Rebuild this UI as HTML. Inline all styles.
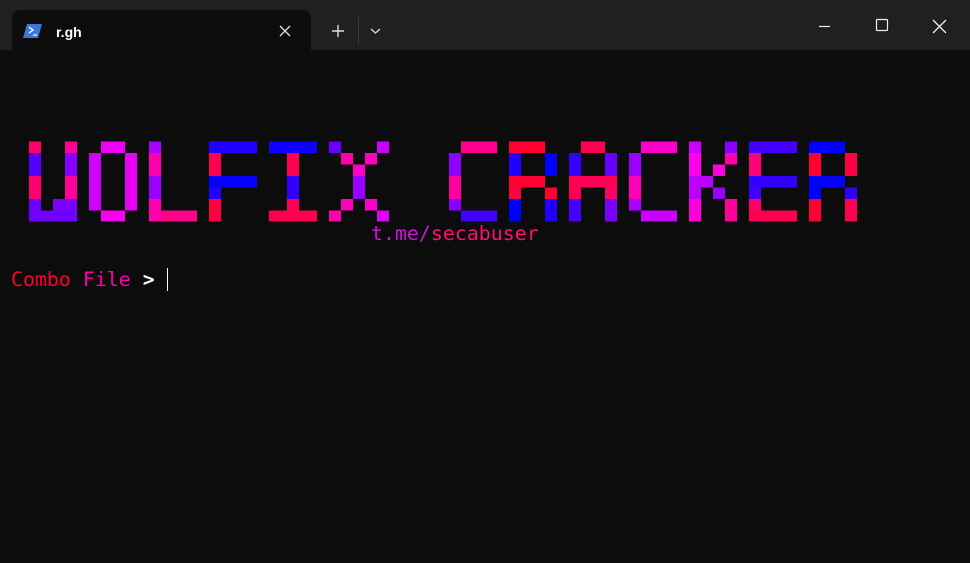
<!DOCTYPE html>
<html><head><meta charset="utf-8"><style>
html,body{margin:0;padding:0;width:970px;height:563px;overflow:hidden;background:#0c0c0c}
.top{position:absolute;left:0;top:0;width:970px;height:50px;background:#202020}
.tab{position:absolute;left:12px;top:10px;width:299px;height:41px;background:#0c0c0c;border-radius:8px 8px 0 0}
.t{position:absolute;font-family:"DejaVu Sans Mono","Liberation Mono",monospace;font-size:19.9px;white-space:pre;line-height:23px}
</style></head><body>
<div class="top"></div>
<div class="tab"></div>
<svg style="position:absolute;left:0;top:0" width="970" height="563">
<polygon points="27,24 42,24 38,38 23,38" fill="#3b78d8"/>
<path d="M29,27 l4,3 -4,3" stroke="#fff" stroke-width="1.4" fill="none"/>
<line x1="33" y1="35" x2="37" y2="35" stroke="#fff" stroke-width="1.2"/>
<text x="56" y="37" font-family="Liberation Sans,sans-serif" font-size="14" font-weight="bold" fill="#fff">r.gh</text>
<path d="M280,26 l10,10 M290,26 l-10,10" stroke="#ddd" stroke-width="1.3"/>
<path d="M332,31 h12 M338,25 v12" stroke="#ddd" stroke-width="1.4"/>
<line x1="358.5" y1="17" x2="358.5" y2="45" stroke="#3a3a3a"/>
<path d="M371,29 l4.5,4 4.5,-4" stroke="#ddd" stroke-width="1.3" fill="none"/>
<line x1="819" y1="26.5" x2="830" y2="26.5" stroke="#eee" stroke-width="1.2"/>
<rect x="876.5" y="19.5" width="11" height="11" stroke="#eee" stroke-width="1.2" fill="none" rx="1"/>
<path d="M933,20 l13,13 M946,20 l-13,13" stroke="#eee" stroke-width="1.3"/>
<g shape-rendering="crispEdges">
<rect x="29" y="141.7" width="12" height="11.4" fill="#ff0070"/><rect x="65" y="141.7" width="12" height="11.4" fill="#ff0099"/>
<rect x="29" y="153" width="12" height="23" fill="#5500ff"/><rect x="65" y="153" width="12" height="23" fill="#8800ff"/>
<rect x="29" y="176" width="12" height="23" fill="#ff0070"/><rect x="65" y="176" width="12" height="23" fill="#ff0099"/>
<rect x="29" y="199" width="12" height="22.7" fill="#6a00ff"/><rect x="53" y="199" width="24" height="22.7" fill="#7a00ff"/><rect x="29" y="210.5" width="48" height="11.2" fill="#7000ff"/>
<rect x="101" y="141.7" width="24" height="11.4" fill="#f000f8"/><rect x="89" y="153" width="12" height="57.5" fill="#d000ff"/><rect x="125" y="153" width="12" height="57.5" fill="#e800f8"/><rect x="101" y="210.5" width="24" height="11.2" fill="#f800f0"/>
<rect x="149" y="141.7" width="12" height="11.4" fill="#aa00ff"/><rect x="149" y="153" width="12" height="23" fill="#ff00b0"/><rect x="149" y="176" width="12" height="23" fill="#9900ff"/><rect x="149" y="199" width="12" height="22.7" fill="#ff00aa"/><rect x="161" y="210.5" width="36" height="11.2" fill="#ff0088"/>
<rect x="209" y="141.7" width="48" height="11.4" fill="#2200ff"/><rect x="209" y="153" width="12" height="23" fill="#ff0050"/><rect x="209" y="176" width="48" height="11.5" fill="#0800ff"/><rect x="209" y="187.5" width="12" height="11.5" fill="#2200ff"/><rect x="209" y="199" width="12" height="22.7" fill="#ff0040"/>
<rect x="269" y="141.7" width="48" height="11.4" fill="#1000ff"/><rect x="287" y="153" width="12" height="23" fill="#ff0050"/><rect x="287" y="176" width="12" height="23" fill="#3300ff"/><rect x="287" y="199" width="12" height="11.5" fill="#ff0055"/><rect x="269" y="210.5" width="48" height="11.2" fill="#ff0050"/>
<rect x="329" y="141.7" width="12" height="11.4" fill="#6600ff"/><rect x="377" y="141.7" width="12" height="11.4" fill="#cc00ff"/>
<rect x="341" y="153" width="12" height="11.5" fill="#ff00aa"/><rect x="365" y="153" width="12" height="11.5" fill="#ff00bb"/>
<rect x="353" y="164.5" width="12" height="11.5" fill="#ff00c8"/><rect x="353" y="176" width="12" height="23" fill="#9900ff"/>
<rect x="341" y="199" width="12" height="11.5" fill="#ff00bb"/><rect x="365" y="199" width="12" height="11.5" fill="#ff00cc"/>
<rect x="329" y="210.5" width="12" height="11.2" fill="#ff00aa"/><rect x="377" y="210.5" width="12" height="11.2" fill="#dd00ff"/>
<rect x="461" y="141.7" width="36" height="11.4" fill="#ff0090"/><rect x="449" y="153" width="12" height="23" fill="#9000ff"/><rect x="449" y="176" width="12" height="23" fill="#ff00a0"/><rect x="449" y="199" width="12" height="11.5" fill="#8800ff"/><rect x="461" y="210.5" width="36" height="11.2" fill="#4400ff"/>
<rect x="509" y="141.7" width="36" height="11.4" fill="#ff0030"/><rect x="509" y="153" width="12" height="23" fill="#2200ff"/><rect x="545" y="153" width="12" height="23" fill="#0000ff"/><rect x="509" y="176" width="36" height="11.5" fill="#ff0030"/><rect x="509" y="187.5" width="12" height="11.5" fill="#ff0040"/><rect x="545" y="187.5" width="12" height="11.5" fill="#ff0030"/><rect x="509" y="199" width="12" height="22.7" fill="#0000ff"/><rect x="545" y="199" width="12" height="22.7" fill="#2200ff"/>
<rect x="581" y="141.7" width="24" height="11.4" fill="#ff0055"/><rect x="569" y="153" width="12" height="23" fill="#3300ff"/><rect x="605" y="153" width="12" height="23" fill="#6600ff"/><rect x="569" y="176" width="48" height="11.5" fill="#ff0055"/><rect x="569" y="187.5" width="12" height="11.5" fill="#ff0055"/><rect x="605" y="187.5" width="12" height="11.5" fill="#ff0066"/><rect x="569" y="199" width="12" height="22.7" fill="#4400ff"/><rect x="605" y="199" width="12" height="22.7" fill="#7700ff"/>
<rect x="641" y="141.7" width="36" height="11.4" fill="#ff00cc"/><rect x="629" y="153" width="12" height="23" fill="#9900ff"/><rect x="629" y="176" width="12" height="23" fill="#ff00bb"/><rect x="629" y="199" width="12" height="11.5" fill="#aa00ff"/><rect x="641" y="210.5" width="36" height="11.2" fill="#cc00ff"/>
<rect x="689" y="141.7" width="12" height="11.4" fill="#cc00ff"/><rect x="689" y="153" width="12" height="23" fill="#ff00ee"/><rect x="689" y="176" width="24" height="11.5" fill="#bb00ff"/><rect x="689" y="187.5" width="12" height="11.5" fill="#bb00ff"/><rect x="689" y="199" width="12" height="22.7" fill="#ff00dd"/>
<rect x="725" y="141.7" width="12" height="11.4" fill="#8800ff"/><rect x="725" y="153" width="12" height="11.5" fill="#ff00aa"/><rect x="713" y="164.5" width="12" height="11.5" fill="#ff00dd"/><rect x="713" y="187.5" width="12" height="11.5" fill="#9900ff"/><rect x="725" y="199" width="12" height="22.7" fill="#ff0099"/>
<rect x="749" y="141.7" width="48" height="11.4" fill="#4400ff"/><rect x="749" y="153" width="12" height="23" fill="#ff0077"/><rect x="749" y="176" width="48" height="11.5" fill="#3300ff"/><rect x="749" y="187.5" width="12" height="11.5" fill="#4400ff"/><rect x="749" y="199" width="12" height="11.5" fill="#ff0066"/><rect x="749" y="210.5" width="48" height="11.2" fill="#ff0050"/>
<rect x="809" y="141.7" width="36" height="11.4" fill="#0000ff"/><rect x="809" y="153" width="12" height="23" fill="#ff0030"/><rect x="845" y="153" width="12" height="23" fill="#ff0044"/><rect x="809" y="176" width="36" height="11.5" fill="#0800ff"/><rect x="809" y="187.5" width="12" height="11.5" fill="#0000ff"/><rect x="845" y="187.5" width="12" height="11.5" fill="#3300ff"/><rect x="809" y="199" width="12" height="22.7" fill="#ff0030"/><rect x="845" y="199" width="12" height="22.7" fill="#ff0050"/>
</g>
<line x1="167.5" y1="268" x2="167.5" y2="291" stroke="#fff" stroke-width="1"/>
</svg>
<div class="t" style="left:371px;top:222px;color:#d010e0">t.me/<span style="color:#ff1070">secabuser</span></div>
<div class="t" style="left:11px;top:268px;color:#ff0030">Combo <span style="color:#ff00aa">File</span> <span style="color:#fff;font-weight:bold">&gt;</span></div>
</body></html>
